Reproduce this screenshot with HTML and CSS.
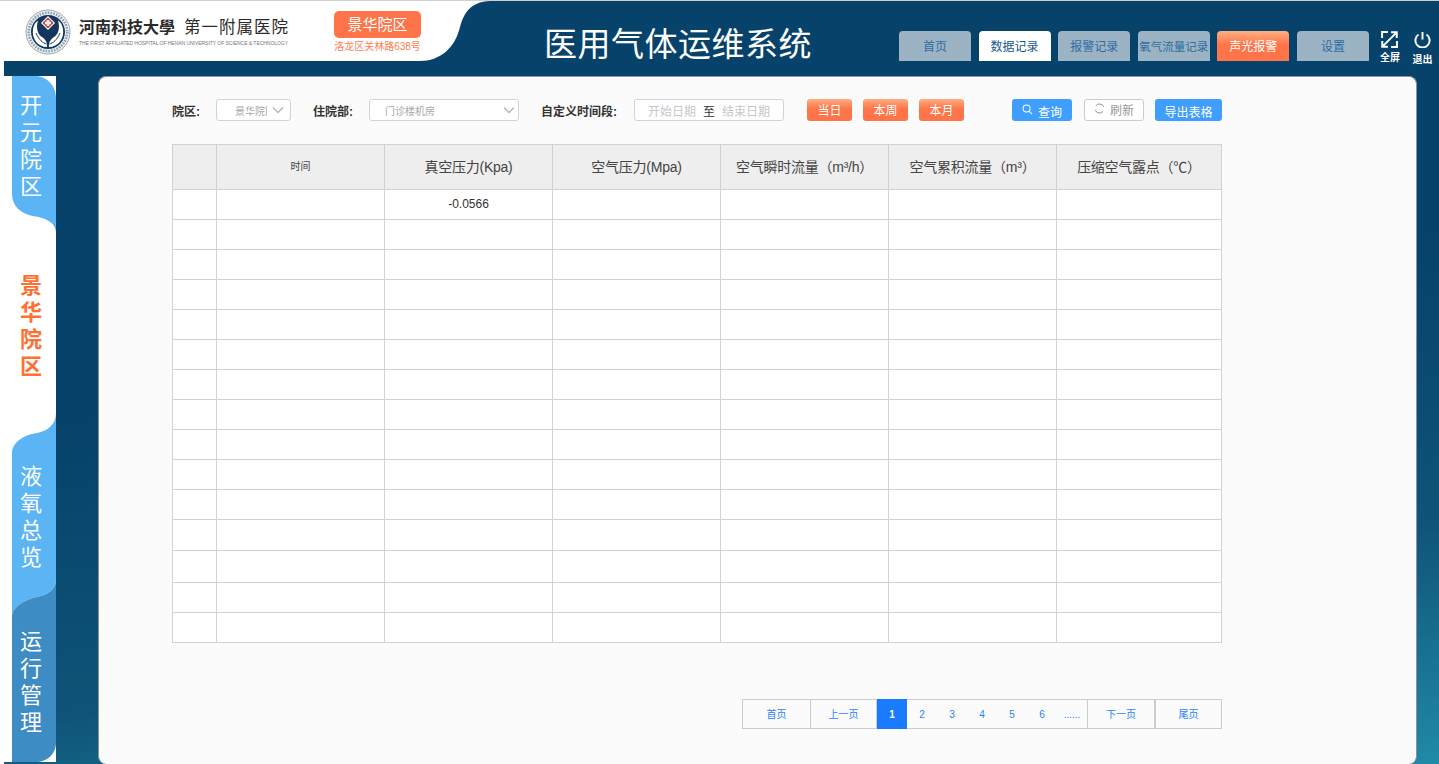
FILE: index.html
```html
<!DOCTYPE html>
<html lang="zh-CN">
<head>
<meta charset="utf-8">
<title>医用气体运维系统</title>
<link rel="stylesheet" href="styles.css">
</head>
<body>
<div class="app">
  <header class="header">
    <div class="brand">
      <svg class="brand-bg" viewBox="0 0 490 60" aria-hidden="true"><path d="M0,0H490C470,1 464,12 460,26C455,47 440,60 420,60H0Z" fill="#fff"/></svg>
      <svg class="logo" viewBox="0 0 46 46" aria-hidden="true">
        <circle cx="23" cy="23" r="22" fill="#eef1f3" stroke="#9aa8b4" stroke-width="1"/>
        <circle cx="23" cy="23" r="19.2" fill="none" stroke="#8d9eac" stroke-width="2.6" stroke-dasharray="1.6 1.2"/>
        <circle cx="23" cy="23" r="17" fill="#12365f"/>
        <path d="M22,38C13,38 6.5,30 8,20C8.600,16 10.500,13 13,11.500C11,18 12,25 17,28C20,30 22.500,33 22,38Z" fill="#fff"/>
        <path d="M24,38C33,38 39.500,30 38,20C37.400,16 35.500,13 33,11.500C35,18 34,25 29,28C26,30 23.500,33 24,38Z" fill="#fff"/>
        <path d="M11,24C14,31 18,34 21.500,35M35,24C32,31 28,34 24.500,35" fill="none" stroke="#12365f" stroke-width="1"/>
        <path d="M23,7L30,14L23,21L16,14Z" fill="#fff"/>
        <path d="M23,8.500L28.500,14L23,19.500L17.500,14Z" fill="#d0392f"/>
        <path d="M21.700,11H24.300V12.700H26V15.300H24.300V17H21.700V15.300H20V12.700H21.700Z" fill="#fff"/>
      </svg>
      <div class="brand-name">
        <div class="brand-cn"><span class="brand-school">河南科技大學</span><span class="brand-hosp">第一附属医院</span></div>
        <div class="brand-en">THE FIRST AFFILIATED HOSPITAL OF HENAN UNIVERSITY OF SCIENCE &amp; TECHNOLOGY</div>
      </div>
      <div class="campus">
        <div class="campus-badge">景华院区</div>
        <div class="campus-addr">洛龙区关林路638号</div>
      </div>
    </div>
    <h1 class="title">医用气体运维系统</h1>
    <nav class="nav">
      <a class="nav-item">首页</a>
      <a class="nav-item is-active">数据记录</a>
      <a class="nav-item">报警记录</a>
      <a class="nav-item is-tight">氧气流量记录</a>
      <a class="nav-item is-alarm">声光报警</a>
      <a class="nav-item">设置</a>
    </nav>
    <div class="tools">
      <div class="tool">
        <svg class="tool-icon" viewBox="0 0 16 16" aria-hidden="true"><path d="M1,6.500V1H6.500M15,9.500V15H9.500M9.500,1.200H14.800V6.500M1.200,9.500V14.800H6.500M14,2L2,14" fill="none" stroke="#fff" stroke-width="1.900"/></svg>
        <span class="tool-label">全屏</span>
      </div>
      <div class="tool">
        <svg class="tool-icon" viewBox="0 0 16 16" aria-hidden="true"><path d="M4.300,3.300A6.700,6.700 0 1 0 11.700,3.300M8,1V8" fill="none" stroke="#f2f6f8" stroke-width="1.900"/></svg>
        <span class="tool-label tool-label-low">退出</span>
      </div>
    </div>
  </header>
  <main class="main">
    <aside class="sidebar">
      <svg class="side-bg" viewBox="4 76 52 686" aria-hidden="true">
        <path d="M12,76H35C47,76 56,86 56,98V233C56,222 45,218 33,216C22,214 12,207 12,193Z" fill="#5bb5f5"/>
        <path d="M12,453C12,443 23,435 37,433C47,431 56,425 56,413V580C56,590 47,595 37,597C23,600 12,608 12,617Z" fill="#5bb5f5"/>
        <path d="M12,617C12,608 23,600 37,597C47,595 56,590 56,580V743C56,754 47,762 36,762H12Z" fill="#3d8cc3"/>
      </svg>
      <div class="tab tab-a">开元院区</div>
      <div class="tab tab-b is-current">景华院区</div>
      <div class="tab tab-c">液氧总览</div>
      <div class="tab tab-d">运行管理</div>
    </aside>
    <section class="card">
      <div class="filters">
        <label class="f-label f-campus">院区:</label>
        <div class="select select-sm"><span class="select-text">景华院区</span><svg class="chev" viewBox="0 0 12 8" aria-hidden="true"><path d="M1,1.500L6,6.500L11,1.500" fill="none" stroke="#b4b8bf" stroke-width="1.500"/></svg></div>
        <label class="f-label f-ward">住院部:</label>
        <div class="select select-lg"><span class="select-text">门诊楼机房</span><svg class="chev" viewBox="0 0 12 8" aria-hidden="true"><path d="M1,1.500L6,6.500L11,1.500" fill="none" stroke="#b4b8bf" stroke-width="1.500"/></svg></div>
        <label class="f-label f-time">自定义时间段:</label>
        <div class="range"><span>开始日期</span><b>至</b><span>结束日期</span></div>
        <button class="btn btn-orange b-day">当日</button>
        <button class="btn btn-orange b-week">本周</button>
        <button class="btn btn-orange b-month">本月</button>
        <button class="btn btn-blue b-query"><svg class="btn-icon" viewBox="0 0 12 12" aria-hidden="true"><circle cx="5" cy="5" r="3.800" fill="none" stroke="#fff" stroke-width="1.100"/><path d="M8,8L11,11" stroke="#fff" stroke-width="1.100"/></svg><span class="btn-low">查询</span></button>
        <button class="btn btn-plain b-refresh"><svg class="btn-icon" viewBox="0 0 12 12" aria-hidden="true"><path d="M10.600,4.200A5,5 0 0 0 2,3M1.400,7.800A5,5 0 0 0 10,9" fill="none" stroke="#888" stroke-width="1"/></svg><span>刷新</span></button>
        <button class="btn btn-blue b-export"><span class="btn-low">导出表格</span></button>
      </div>
      <table class="grid">
        <colgroup><col class="c-idx"><col class="c-n"><col class="c-n"><col class="c-n"><col class="c-n"><col class="c-n"><col class="c-l"></colgroup>
        <thead>
          <tr><th></th><th class="th-sm">时间</th><th>真空压力(Kpa)</th><th>空气压力(Mpa)</th><th>空气瞬时流量（m³/h）</th><th>空气累积流量（m³）</th><th>压缩空气露点（℃）</th></tr>
        </thead>
        <tbody>
          <tr><td></td><td></td><td>-0.0566</td><td></td><td></td><td></td><td></td></tr>
          <tr><td></td><td></td><td></td><td></td><td></td><td></td><td></td></tr>
          <tr><td></td><td></td><td></td><td></td><td></td><td></td><td></td></tr>
          <tr><td></td><td></td><td></td><td></td><td></td><td></td><td></td></tr>
          <tr><td></td><td></td><td></td><td></td><td></td><td></td><td></td></tr>
          <tr><td></td><td></td><td></td><td></td><td></td><td></td><td></td></tr>
          <tr><td></td><td></td><td></td><td></td><td></td><td></td><td></td></tr>
          <tr><td></td><td></td><td></td><td></td><td></td><td></td><td></td></tr>
          <tr><td></td><td></td><td></td><td></td><td></td><td></td><td></td></tr>
          <tr><td></td><td></td><td></td><td></td><td></td><td></td><td></td></tr>
          <tr><td></td><td></td><td></td><td></td><td></td><td></td><td></td></tr>
          <tr class="row-31"><td></td><td></td><td></td><td></td><td></td><td></td><td></td></tr>
          <tr class="row-32"><td></td><td></td><td></td><td></td><td></td><td></td><td></td></tr>
          <tr><td></td><td></td><td></td><td></td><td></td><td></td><td></td></tr>
          <tr><td></td><td></td><td></td><td></td><td></td><td></td><td></td></tr>
        </tbody>
      </table>
      <div class="pager">
        <a class="pg pg-first">首页</a>
        <a class="pg pg-prev">上一页</a>
        <a class="pg-num is-on">1</a>
        <a class="pg-num">2</a>
        <a class="pg-num">3</a>
        <a class="pg-num">4</a>
        <a class="pg-num">5</a>
        <a class="pg-num">6</a>
        <a class="pg-num">......</a>
        <a class="pg pg-next">下一页</a>
        <a class="pg pg-last">尾页</a>
      </div>
    </section>
  </main>
</div>
</body>
</html>
```
FILE: styles.css
```css
* { box-sizing: border-box; }
html, body { margin: 0; padding: 0; height: 100%; background: #fff; }
body { font-family: "Liberation Sans", "Noto Sans CJK SC", sans-serif; overflow: hidden; }
.app {
  width: 1439px; height: 764px; display: flex; flex-direction: column;
  border-top: 1px solid #cfcfcf;
  background: linear-gradient(172deg, #06426a 0%, #06426a 45%, #0f5478 75%, #218aa6 100%);
  overflow: hidden;
}
.header { height: 60px; flex: none; display: flex; position: relative; }
.brand { position: relative; width: 490px; flex: none; display: flex; align-items: flex-start; padding-left: 25px; }
.brand-bg { position: absolute; left: 0; top: 0; width: 490px; height: 60px; }
.logo { position: relative; width: 46px; height: 46px; flex: none; margin-top: 8px; }
.brand-name { position: relative; margin-left: 8px; width: 216px; flex: none; padding-top: 14px; }
.brand-cn { display: flex; height: 22px; align-items: center; color: #333; white-space: nowrap; }
.brand-school { font-size: 16px; font-weight: 700; width: 105px; color: #2b2b2b; }
.brand-hosp { font-size: 16.5px; letter-spacing: 1px; font-weight: 400; color: #2b2b2b; }
.brand-en { font-size: 5px; line-height: 8px; color: #777; white-space: nowrap; margin-top: 2px; letter-spacing: -.04px; }
.campus { position: relative; margin-left: 39px; width: 87px; flex: none; padding-top: 10px; }
.campus-badge { height: 27px; background: #ff7549; border-radius: 5px; color: #fff; font-size: 15px; line-height: 27px; text-align: center; }
.campus-addr { font-size: 10px; line-height: 16px; margin-top: 1px; color: #ff7d52; text-align: center; white-space: nowrap; }
.title { margin: 0 0 0 54px; padding-top: 20px; font-size: 33px; line-height: 42px; font-weight: 400; color: #fff; white-space: nowrap; letter-spacing: .5px; width: 272px; flex: none; font-family: "Noto Sans CJK SC", sans-serif; }
.nav { display: flex; gap: 7.600px; margin-left: 83px; padding-top: 30px; flex: none; }
.nav-item { width: 72px; height: 30px; border-radius: 4px 4px 0 0; background: #9cb3c4; color: #2d6ca3; font-size: 12px; line-height: 33px; text-align: center; white-space: nowrap; }
.nav-item.is-active { background: #fff; color: #15598f; }
.nav-item.is-alarm { background: linear-gradient(#ffb184 0%, #ff7549 45%); color: #fff; }
.nav-item.is-tight { font-size: 11.500px; }
.tools { display: flex; gap: 12.500px; margin-left: 11px; padding-top: 30px; }
.tool { width: 20px; display: flex; flex-direction: column; align-items: center; color: #fff; }
.tool-icon { width: 17px; height: 17px; flex: none; }
.tool-label { font-size: 10px; line-height: 12px; margin-top: 4px; font-weight: 700; white-space: nowrap; }
.tool-label-low { margin-top: 6px; }
.main { flex: 1; display: flex; padding-top: 15px; border-left: 4px solid #fff; min-height: 0; }
.sidebar { position: relative; width: 52px; flex: none; background: #fff; margin-bottom: 2px; padding-left: 16px; }
.side-bg { position: absolute; left: 0; top: 0; width: 52px; height: 686px; }
.tab { position: relative; width: 22px; font-size: 22px; line-height: 27px; color: #fff; padding-top: 13.500px; font-family: "Noto Sans CJK SC", sans-serif; word-break: break-all; }
.tab-a { height: 180px; }
.tab-b { height: 191px; }
.tab-c { height: 165px; }
.tab-d { height: 150px; }
.tab.is-current { color: #ff7033; font-weight: 700; }
.card { width: 1319px; margin-left: 42px; background: #fbfbfb; border: 1px solid #8d9499; border-bottom: 0; border-radius: 8px; padding: 22px 0 0 73px; }
.filters { width: 1050px; height: 22px; display: flex; align-items: center; }
.f-label { font-size: 12px; font-weight: 700; color: #333; white-space: nowrap; }
.f-campus { width: 44px; }
.f-ward { width: 56px; margin-left: 22px; }
.f-time { width: 93px; margin-left: 22px; }
.select { height: 22px; border: 1px solid #d0d3d8; border-radius: 3px; background: #fff; display: flex; align-items: center; font-size: 10px; color: #a8a8a8; position: relative; }
.select-sm { width: 75px; padding-left: 18px; }
.select-sm .select-text { width: 32px; }
.select-lg { width: 150px; padding-left: 15px; }
.select-lg .select-text { width: 113px; }
.select-text { overflow: hidden; white-space: nowrap; flex: none; }
.chev { width: 12px; height: 8px; margin-left: 5px; flex: none; }
.range { width: 150px; height: 22px; border: 1px solid #d0d3d8; border-radius: 3px; background: #fff; display: flex; justify-content: center; align-items: center; gap: 7px; font-size: 12px; color: #c4c7cc; white-space: nowrap; }
.range b { font-weight: 400; color: #333; }
.btn { height: 22px; border: 0; border-radius: 3px; padding: 0; font: inherit; font-size: 12px; display: flex; align-items: center; justify-content: center; color: #fff; white-space: nowrap; }
.btn-orange { width: 45px; padding-bottom: 2px; background: linear-gradient(#ffad83 0%, #ff7549 45%); }
.btn-blue { background: #409eff; }
.btn-plain { background: #fff; border: 1px solid #ccc; color: #999; padding-bottom: 1px; }
.b-day { margin-left: 23px; }
.b-week, .b-month { margin-left: 11px; }
.b-query { width: 60px; margin-left: 48px; }
.b-refresh { width: 60px; margin-left: 12px; }
.b-export { width: 67px; margin-left: 11px; }
.btn-icon { width: 11px; height: 11px; margin-right: 5px; position: relative; top: -1px; }
.btn-low { position: relative; top: 1px; }
.grid { width: 1049px; margin-top: 23px; border-collapse: collapse; table-layout: fixed; background: #fff; }
.c-idx { width: 44px; }
.c-n { width: 168px; }
.c-l { width: 165px; }
.grid th, .grid td { border: 1px solid #d2d2d2; padding: 0; text-align: center; color: #333; }
.grid th { height: 45px; padding-bottom: 3px; background: #eee; font-size: 14px; letter-spacing: -.25px; font-weight: 400; color: #444; white-space: nowrap; }
.grid th.th-sm { font-size: 10px; letter-spacing: 0; }
.grid td { height: 30px; padding-bottom: 2px; font-size: 12px; }
.row-31 td { height: 31px; }
.row-32 td { height: 32px; }
.pager { width: 480px; height: 30px; margin: 56px 0 0 570px; display: flex; font-size: 10px; color: #2a7fff; }
.pg { height: 30px; text-align: center; line-height: 29px; border: 1px solid #ccc; background: #fbfbfb; }
.pg-first { width: 69px; }
.pg-prev { width: 66px; border-left: 0; }
.pg-next { width: 68px; }
.pg-last { width: 67px; }
.pg-num { width: 30px; height: 30px; line-height: 29px; text-align: center; border-top: 1px solid #ccc; border-bottom: 1px solid #ccc; }
.pg-num.is-on { background: #1a7bff; border-color: #1a7bff; color: #fff; font-weight: 700; }
```
